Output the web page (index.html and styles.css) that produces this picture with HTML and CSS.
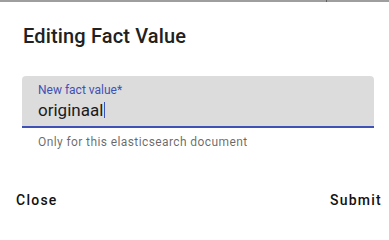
FILE: index.html
```html
<!DOCTYPE html>
<html>
<head>
<meta charset="utf-8">
<link rel="stylesheet" href="styles.css">
</head>
<body>
<div class="topbar"><div class="topbar-left"></div><div class="topbar-mark"></div><div class="topbar-right"></div></div>
<div class="dialog">
  <h2 class="title">Editing Fact Value</h2>
  <div class="content">
    <div class="field">
      <div class="label">New fact value*</div>
      <div class="value"><span>originaal</span><span class="caret"></span></div>
    </div>
    <div class="helper">Only for this elasticsearch document</div>
  </div>
  <div class="actions">
    <button class="btn">Close</button>
    <button class="btn">Submit</button>
  </div>
</div>
</body>
</html>
```

FILE: styles.css
```css
html, body {
  margin: 0;
  padding: 0;
  background: #ffffff;
  font-family: Roboto, "Liberation Sans", sans-serif;
  color: rgba(0, 0, 0, 0.87);
  overflow: hidden;
}
.topbar {
  display: flex;
  height: 2px;
}
.topbar-left {
  width: 326px;
  background: #9e9e9e;
}
.topbar-mark {
  width: 1px;
  background: #5f5f5f;
}
.topbar-right {
  flex: 1;
  background: #9e9e9e;
}
.dialog {
  display: flex;
  flex-direction: column;
}
.title {
  margin: 18px 0 0 0;
  padding: 0 0 0 23px;
  font-size: 20px;
  font-weight: 500;
  line-height: 32px;
  letter-spacing: 0.15px;
  color: #212121;
}
.content {
  display: flex;
  flex-direction: column;
  padding: 0 15px 0 22px;
  margin-top: 24px;
}
.field {
  height: 50px;
  background: #dcdcdc;
  border-bottom: 2px solid #3f51b5;
  border-radius: 4px 4px 0 0;
  padding: 0 16px;
  display: flex;
  flex-direction: column;
}
.label {
  margin-top: 7px;
  font-size: 12px;
  line-height: 14px;
  color: #3f51b5;
}
.value {
  margin-top: 3px;
  font-size: 17px;
  line-height: 20px;
  display: flex;
  align-items: center;
  color: #1a1a1a;
}
.caret {
  width: 1px;
  height: 16px;
  margin-left: 1px;
  background: #3f51b5;
}
.helper {
  padding-left: 16px;
  margin-top: 4px;
  font-size: 12px;
  line-height: 20px;
  letter-spacing: 0.4px;
  color: rgba(0, 0, 0, 0.6);
}
.actions {
  display: flex;
  justify-content: space-between;
  padding: 0 7px 0 16px;
  margin-top: 38px;
}
.btn {
  border: none;
  background: none;
  padding: 0;
  font-family: Roboto, "Liberation Sans", sans-serif;
  font-size: 14px;
  font-weight: 500;
  letter-spacing: 1.25px;
  line-height: 20px;
  color: #111111;
}
```
